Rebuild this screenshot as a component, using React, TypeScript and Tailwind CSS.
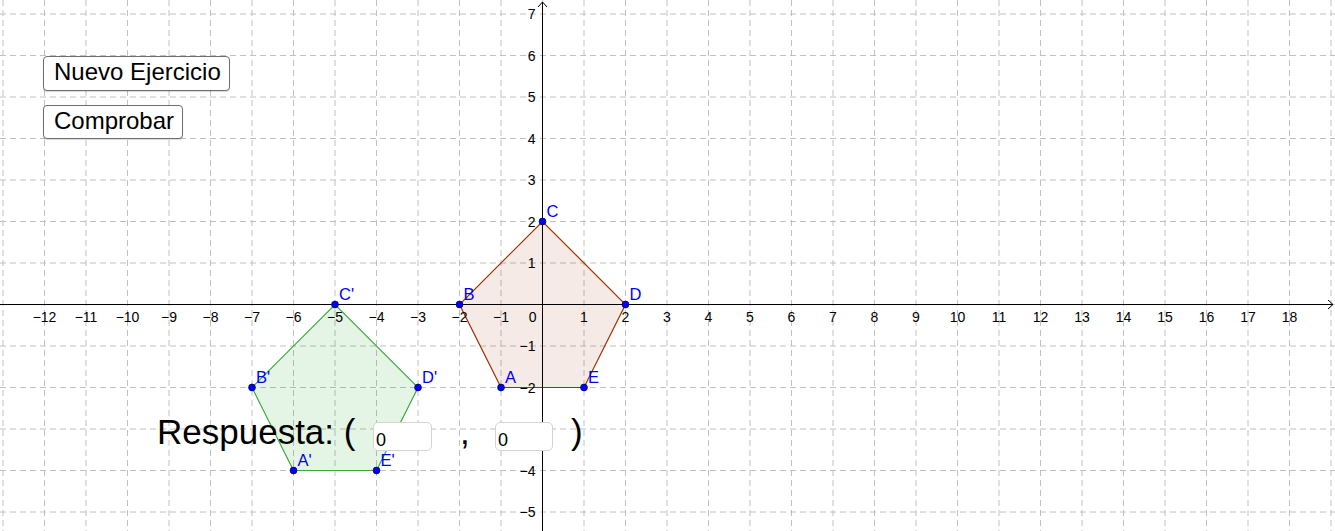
import React from 'react';

const ox = 542.5;
const oy = 304.5;
const u = 41.5;
const X = (x: number) => ox + x * u;
const Y = (y: number) => oy - y * u;

const range = (a: number, b: number) => Array.from({ length: b - a + 1 }, (_, i) => a + i);

type Pt = { name: string; x: number; y: number };

const original: Pt[] = [
  { name: 'A', x: -1, y: -2 },
  { name: 'B', x: -2, y: 0 },
  { name: 'C', x: 0, y: 2 },
  { name: 'D', x: 2, y: 0 },
  { name: 'E', x: 1, y: -2 },
];

// image of ABCDE after translation (-5, -2)
const image: Pt[] = original.map((p) => ({ name: p.name + "'", x: p.x - 5, y: p.y - 2 }));

const toPoints = (pts: Pt[]) => pts.map((p) => `${X(p.x)},${Y(p.y)}`).join(' ');

const minus = (n: number) => (n < 0 ? `\u2212${-n}` : `${n}`);

function Graph() {
  return (
    <svg width={1335} height={531} className="absolute left-0 top-0" style={{ fontFamily: '"Liberation Sans", Arial, sans-serif' }}>
      {/* grid */}
      <g stroke="#c0c0c0" strokeWidth={1} strokeDasharray="6 4">
        {range(-13, 19).map((k) => (
          <line key={'v' + k} x1={X(k)} y1={0} x2={X(k)} y2={531} />
        ))}
        {range(-5, 7).map((k) => (
          <line key={'h' + k} x1={0} y1={Y(k)} x2={1335} y2={Y(k)} />
        ))}
      </g>

      {/* polygons */}
      <polygon points={toPoints(original)} fill="rgba(153,51,0,0.1)" stroke="#993300" strokeWidth={1.2} />
      <polygon points={toPoints(image)} fill="rgba(0,153,0,0.1)" stroke="#3da83d" strokeWidth={1.2} />

      {/* axes */}
      <g stroke="#000" strokeWidth={1} fill="none">
        <line x1={0} y1={oy} x2={1333} y2={oy} />
        <polyline points={`1328,${oy - 4.5} 1333,${oy} 1328,${oy + 4.5}`} />
        <line x1={ox} y1={2} x2={ox} y2={531} />
        <polyline points={`${ox - 4.5},7 ${ox},2 ${ox + 4.5},7`} />
      </g>

      {/* axis labels */}
      <g fontSize={14} fill="#000">
        {range(-12, 18)
          .filter((k) => k !== 0)
          .map((k) => (
            <text key={'xl' + k} x={X(k)} y={oy + 17.5} textAnchor="middle">
              {minus(k)}
            </text>
          ))}
        {range(-5, 7)
          .filter((k) => k !== 0)
          .map((k) => (
            <text key={'yl' + k} x={ox - 7} y={Y(k) + 5} textAnchor="end">
              {minus(k)}
            </text>
          ))}
        <text x={ox - 6} y={oy + 17.5} textAnchor="end">
          0
        </text>
      </g>

      {/* points */}
      {[...original, ...image].map((p) => (
        <g key={p.name}>
          <circle cx={X(p.x)} cy={Y(p.y)} r={3.4} fill="#0000ff" stroke="#00005a" strokeWidth={0.8} />
          <text x={X(p.x) + 4} y={Y(p.y) - 5} fontSize={16.5} fill="#0000ff">
            {p.name}
          </text>
        </g>
      ))}
    </svg>
  );
}

const sans = 'font-["Liberation_Sans",Arial,sans-serif]';

export default function App() {
  return (
    <div className={`relative w-[1335px] h-[531px] bg-white overflow-hidden ${sans}`}>
      <Graph />

      <button className="absolute left-[43px] top-[56px] h-[35px] w-[187px] text-left bg-white border border-[#6e6e6e] rounded-[4px] pl-[10px] pt-[3px] text-[24px] leading-[24px] text-black shadow-[0_1px_1px_rgba(0,0,0,0.15)] flex items-start">
        Nuevo Ejercicio
      </button>
      <button className="absolute left-[43px] top-[105px] h-[34px] w-[140px] text-left bg-white border border-[#6e6e6e] rounded-[4px] pl-[10px] pt-[3px] text-[24px] leading-[24px] text-black shadow-[0_1px_1px_rgba(0,0,0,0.15)] flex items-start">
        Comprobar
      </button>

      <div className="absolute left-[157px] top-[414px] text-[35px] leading-[35px] text-black whitespace-pre">Respuesta: (</div>
      <input
        readOnly
        defaultValue="0"
        className="absolute left-[373px] top-[422px] w-[59px] h-[29px] border border-[#d4d4d4] rounded-[5px] bg-white pl-[2px] pt-[8px] pb-0 text-[18px] leading-[18px] text-black outline-none"
      />
      <div className="absolute left-[460px] top-[414px] text-[35px] leading-[35px] text-black">,</div>
      <input
        readOnly
        defaultValue="0"
        className="absolute left-[495px] top-[422px] w-[58px] h-[29px] border border-[#d4d4d4] rounded-[5px] bg-white pl-[2px] pt-[8px] pb-0 text-[18px] leading-[18px] text-black outline-none"
      />
      <div className="absolute left-[571px] top-[414px] text-[35px] leading-[35px] text-black">)</div>
    </div>
  );
}
